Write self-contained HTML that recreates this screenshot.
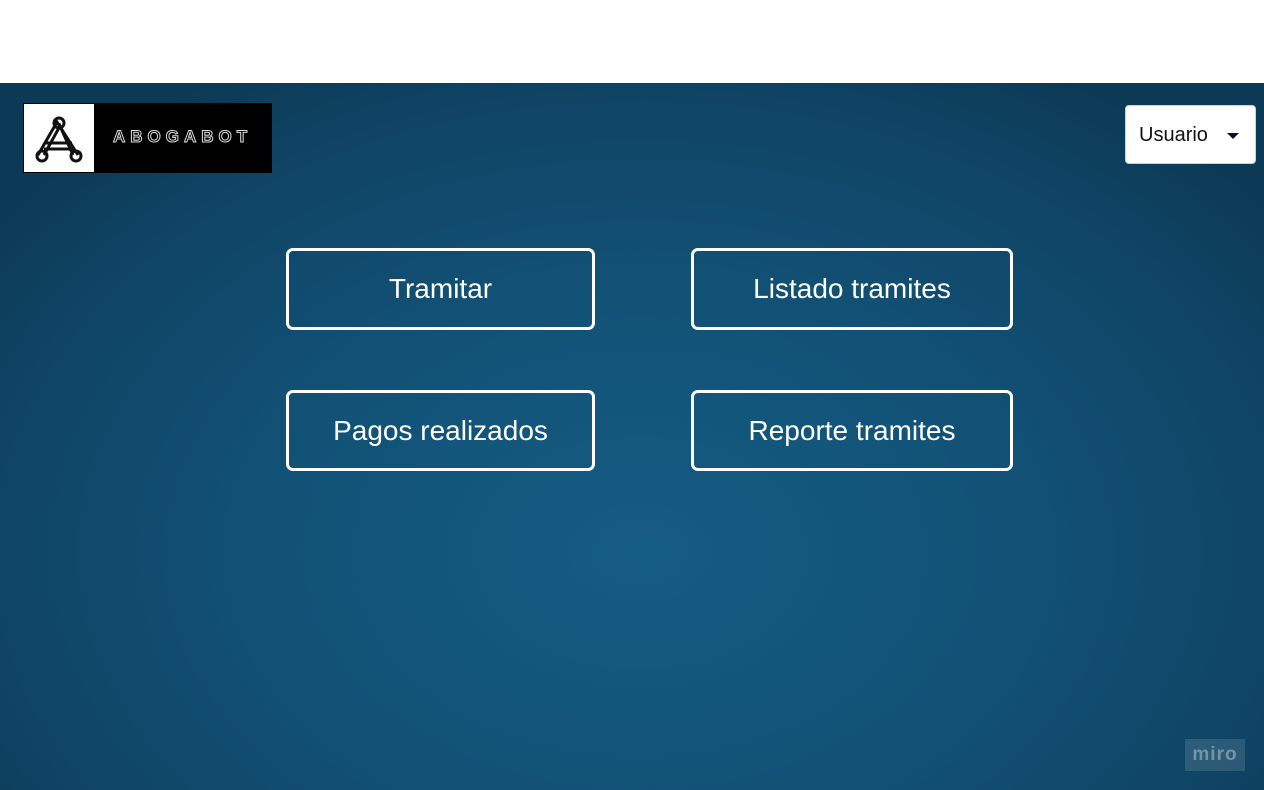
<!DOCTYPE html>
<html><head><meta charset="utf-8"><style>
html,body{margin:0;padding:0;width:1264px;height:790px;overflow:hidden;font-family:"Liberation Sans",Arial,sans-serif}
.top{position:absolute;left:0;top:0;width:1264px;height:83px;background:#fff}
.bg{position:absolute;left:0;top:83px;width:1264px;height:707px;background:radial-gradient(ellipse 800px 560px at 640px 470px,#155c83 0%,#125277 45%,#0f4566 80%,#0c3a56 100%)}
.logo{position:absolute;left:23px;top:103px;width:249px;height:70px;background:#000}
.logo .w{position:absolute;left:1px;top:1px;width:70px;height:68px;background:#fff}
.logo .t{position:absolute;left:90px;top:24px;color:#000;font-size:17px;letter-spacing:5px;font-weight:bold;-webkit-text-stroke:1px #ddd}
.user{position:absolute;left:1125px;top:105px;width:131px;height:59px;background:#fff;border:1px solid #c9d3db;border-radius:4px;box-sizing:border-box;font-size:20px;color:#111}
.user span{position:absolute;left:13px;top:18px}
.user i{position:absolute;left:101px;top:27px;width:0;height:0;border-left:6px solid transparent;border-right:6px solid transparent;border-top:6px solid #0b0b2a}
.b{position:absolute;border:3px solid #fff;border-radius:7px;box-sizing:border-box;color:#fff;font-size:28px;display:flex;align-items:center;justify-content:center}
.miro{position:absolute;left:1185px;top:739px;width:60px;height:32px;background:rgba(255,255,255,0.12);color:rgba(255,255,255,0.35);font-size:19px;font-weight:bold;text-align:center;line-height:32px;letter-spacing:1px}
</style></head><body>
<div class="top"></div>
<div class="bg"></div>
<div class="logo"><div class="w"><svg width="70" height="68" viewBox="0 0 70 68"><g fill="none" stroke="#111" stroke-width="3"><path d="M14 51 L33 18 L54 51"/><path d="M20 51 L36 22 L49 51"/><path d="M22 39 H48 M20 45 H50"/><circle cx="35" cy="19" r="5"/><circle cx="18" cy="52" r="5"/><circle cx="52" cy="52" r="5"/></g></svg></div><div class="t">ABOGABOT</div></div>
<div class="user"><span>Usuario</span><i></i></div>
<div class="b" style="left:286px;top:248px;width:309px;height:82px">Tramitar</div>
<div class="b" style="left:691px;top:248px;width:322px;height:82px">Listado tramites</div>
<div class="b" style="left:286px;top:390px;width:309px;height:81px">Pagos realizados</div>
<div class="b" style="left:691px;top:390px;width:322px;height:81px">Reporte tramites</div>
<div class="miro">miro</div>
</body></html>
